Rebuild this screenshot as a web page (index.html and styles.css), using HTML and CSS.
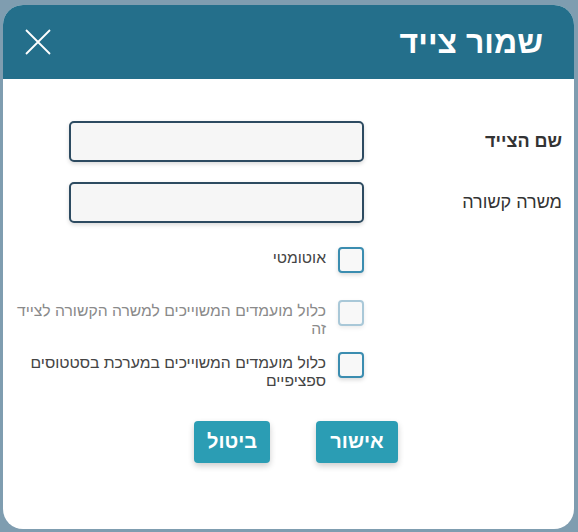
FILE: index.html
```html
<!DOCTYPE html>
<html lang="he" dir="rtl">
<head>
  <meta charset="UTF-8">
  <title>שמור צייד</title>
  <link rel="stylesheet" href="styles.css">
</head>
<body>
  <div class="modal">
    <div class="modal-header">
      <h2 class="modal-title">שמור צייד</h2>
      <button class="close-btn" aria-label="סגור">
        <svg width="26" height="26" viewBox="0 0 26 26">
          <path d="M1 1 L25 25 M25 1 L1 25" stroke="#fff" stroke-width="1.8" fill="none"/>
        </svg>
      </button>
    </div>
    <div class="modal-body">
      <div class="form-grid">
        <label class="field-label bold">שם הצייד</label>
        <input type="text" class="field-input">
        <label class="field-label">משרה קשורה</label>
        <input type="text" class="field-input">
      </div>

      <div class="check-list">
        <label class="check-row">
          <span class="check-box"></span>
          <span class="check-text">אוטומטי</span>
        </label>
        <label class="check-row disabled">
          <span class="check-box"></span>
          <span class="check-text">כלול מועמדים המשוייכים למשרה הקשורה לצייד זה</span>
        </label>
        <label class="check-row">
          <span class="check-box"></span>
          <span class="check-text">כלול מועמדים המשוייכים במערכת בסטטוסים ספציפיים</span>
        </label>
      </div>

      <div class="actions">
        <button class="btn btn-ok">אישור</button>
        <button class="btn btn-cancel">ביטול</button>
      </div>
    </div>
  </div>
</body>
</html>
```

FILE: styles.css
```css
body {
  margin: 0;
  background-color: #7f9db0;
  font-family: "Liberation Sans", "DejaVu Sans", sans-serif;
  direction: rtl;
}
.modal {
  width: 571px;
  height: 524px;
  margin: 5px 4px 0 3px;
  background: #fff;
  border-radius: 20px;
  overflow: hidden;
}
.modal-header {
  height: 74px;
  background: #246f8b;
  display: flex;
  align-items: center;
  justify-content: space-between;
  padding: 0 31px 0 22px;
}
.modal-title {
  margin: 0;
  color: #fff;
  font-size: 32px;
  font-weight: bold;
}
.close-btn {
  background: none;
  border: none;
  padding: 0;
  width: 26px;
  height: 26px;
  cursor: pointer;
}
.modal-body {
  padding-top: 42px;
}
.form-grid {
  display: grid;
  grid-template-columns: 180px 295px;
  column-gap: 18px;
  row-gap: 20px;
  padding-right: 12px;
  align-items: center;
}
.field-label {
  font-size: 18px;
  color: #333;
}
.field-label.bold {
  font-weight: bold;
}
.field-input {
  height: 41px;
  box-sizing: border-box;
  border: 2px solid #2d4b61;
  border-radius: 5px;
  background: #f6f6f6;
  box-shadow: 0 2px 4px rgba(0, 0, 0, 0.15);
}
.check-list {
  margin-top: 24px;
  padding-right: 210px;
}
.check-row {
  display: flex;
  align-items: flex-start;
  gap: 12px;
  height: 52.5px;
}
.check-box {
  flex: none;
  width: 26px;
  height: 26px;
  box-sizing: border-box;
  border: 2px solid #3b8db0;
  border-radius: 4px;
  background: #f8f8f8;
  box-shadow: 0 2px 4px rgba(0, 0, 0, 0.15);
}
.check-text {
  width: 314px;
  padding-top: 2px;
  font-size: 15.7px;
  line-height: 18px;
  color: #444;
}
.check-row.disabled .check-box {
  border-color: #a9c8d8;
  box-shadow: 0 2px 4px rgba(0, 0, 0, 0.08);
}
.check-row.disabled .check-text {
  color: #8a8a8a;
}
.actions {
  display: flex;
  justify-content: center;
  gap: 46px;
  margin-top: 16px;
  padding-left: 15px;
}
.btn {
  height: 42px;
  border: none;
  border-radius: 4px;
  background: #2b9db4;
  color: #fff;
  font-family: inherit;
  font-size: 20px;
  font-weight: bold;
  box-shadow: 0 3px 6px rgba(0, 0, 0, 0.2);
}
.btn-ok {
  width: 82px;
}
.btn-cancel {
  width: 76px;
}
```
